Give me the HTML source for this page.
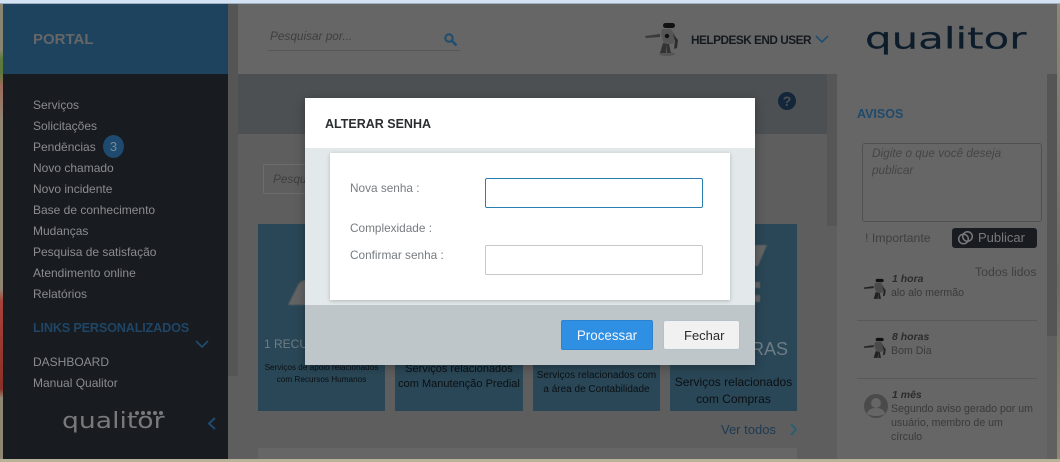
<!DOCTYPE html>
<html lang="pt"><head><meta charset="utf-8"><title>Qualitor</title>
<style>
*{box-sizing:border-box}
html,body{margin:0;padding:0;width:1060px;height:462px;overflow:hidden;background:#5e5e5e;font-family:"Liberation Sans",sans-serif}
.a{position:absolute;white-space:nowrap}
.nav{left:33px;font-size:12px;color:#8a8c8f;line-height:16px}
.logo{transform-origin:0 0;font-family:"DejaVu Sans",sans-serif}
.tile{position:absolute;top:224px;height:187px;background:#2a4757}
.tt{position:absolute;width:100%;text-align:center;color:#0b0f12;left:0;white-space:nowrap}
.time{font-weight:bold;font-style:italic;font-size:10.5px;color:#2c2c2c;left:892px}
.msg{font-size:10.6px;color:#3a3a3a;left:891px;line-height:14px}
.sep{position:absolute;left:857px;width:180px;height:1px;background:#585858}
.lbl{font-size:11.8px;color:#777c80;left:350px}
</style></head><body>
<!-- window edges -->
<div class="a" style="left:0;top:0;width:1060px;height:4px;background:#d3e3f3;border-bottom:1px solid #9fb0c0"></div>
<div class="a" style="left:0;top:4px;width:3px;height:458px;background:linear-gradient(#8a8570 0,#8a8570 10%,#5c7a3c 12%,#5c7a3c 15%,#a06a5c 18%,#8f8774 26%,#8f8774 62%,#a8423a 65%,#8a3028 84%,#8f8774 86%,#8f8774 100%)"></div>
<div class="a" style="left:1057px;top:4px;width:3px;height:458px;background:linear-gradient(#8d8877,#6d6a5e 60%,#8f8a72)"></div>
<div class="a" style="left:0;top:459px;width:1060px;height:3px;background:#b8b298"></div>
<!-- sidebar -->
<div class="a" style="left:3px;top:4px;width:225px;height:70px;background:#1d435f"></div>
<div class="a" style="left:3px;top:74px;width:225px;height:385px;background:#181b20"></div>
<div class="a" style="left:33px;top:31px;font-size:15px;font-weight:bold;color:#666;line-height:18px">PORTAL</div>
<div class="a nav" style="top:97px">Serviços</div>
<div class="a nav" style="top:118px">Solicitações</div>
<div class="a nav" style="top:139px">Pendências</div>
<div class="a" style="left:103px;top:135px;width:21px;height:23px;border-radius:50%;background:#1d4a6e;color:#7d8a94;font-size:13px;text-align:center;line-height:23px">3</div>
<div class="a nav" style="top:160px">Novo chamado</div>
<div class="a nav" style="top:181px">Novo incidente</div>
<div class="a nav" style="top:202px">Base de conhecimento</div>
<div class="a nav" style="top:223px">Mudanças</div>
<div class="a nav" style="top:244px">Pesquisa de satisfação</div>
<div class="a nav" style="top:265px">Atendimento online</div>
<div class="a nav" style="top:286px">Relatórios</div>
<div class="a" style="left:33px;top:320px;font-size:12.7px;font-weight:bold;color:#1f4666;line-height:16px;letter-spacing:-.2px">LINKS PERSONALIZADOS</div>
<svg class="a" style="left:195px;top:339px" width="14" height="10"><path d="M1 2l6 6 6-6" fill="none" stroke="#1f4d70" stroke-width="1.6"/></svg>
<div class="a nav" style="top:354px">DASHBOARD</div>
<div class="a nav" style="top:375px">Manual Qualitor</div>
<div class="a logo" style="left:62px;top:409px;font-size:22px;line-height:26px;color:#77797b;transform:scale(1.21,1)">qualitor</div>
<svg class="a" style="left:134px;top:410px" width="32" height="8"><g fill="#77797b"><circle cx="3" cy="3" r="2"/><circle cx="9" cy="3" r="2"/><circle cx="15" cy="3" r="2"/><circle cx="21" cy="3" r="2"/><circle cx="27" cy="3" r="2"/></g></svg>
<svg class="a" style="left:206px;top:416px" width="12" height="15"><path d="M9 2L3 7.5 9 13" fill="none" stroke="#1f4d70" stroke-width="2"/></svg>
<!-- main backgrounds -->
<div class="a" style="left:228px;top:4px;width:10px;height:372px;background:#555"></div>
<div class="a" style="left:238px;top:4px;width:819px;height:70px;background:#666"></div>
<div class="a" style="left:238px;top:74px;width:589px;height:60px;background:#4c5053"></div>
<div class="a" style="left:827px;top:74px;width:10px;height:152px;background:#565656"></div>
<div class="a" style="left:837px;top:74px;width:210px;height:385px;background:#666"></div>
<div class="a" style="left:1047px;top:74px;width:10px;height:385px;background:#606060"></div>
<div class="a" style="left:1047px;top:74px;width:10px;height:262px;background:#555"></div>
<!-- header -->
<div class="a" style="left:270px;top:28px;font-size:11.8px;font-style:italic;color:#3f3f3f;line-height:16px">Pesquisar por...</div>
<div class="a" style="left:268px;top:50px;width:192px;height:1px;background:#565656"></div>
<svg class="a" style="left:443px;top:32px" width="15" height="15"><circle cx="6" cy="6" r="3.7" fill="none" stroke="#1f4d70" stroke-width="2"/><path d="M9 9l4.5 4.5" stroke="#1f4d70" stroke-width="2.4"/></svg>
<svg class="a" style="left:644px;top:21px" width="36" height="36" viewBox="0 0 36 36"><ellipse cx="23" cy="33" rx="8" ry="2" fill="#555"/><rect x="19" y="2" width="12" height="5" rx="2.5" fill="#111"/><path d="M18 8h9l4 6-1 8-3 1h-6l-2-3-2-7z" fill="#555"/><circle cx="23" cy="15" r="2.2" fill="#111"/><path d="M1 15l15-2v3l-14 1z" fill="#3a3a3a"/><path d="M29 13l5 6-1 8-3 1 1-8z" fill="#2c2c2c"/><path d="M19 22l-3 10h6l1-9zM25 23l2 9h-4v-9z" fill="#333"/></svg>
<div class="a" style="left:691px;top:32px;font-size:11.8px;font-weight:bold;color:#15191d;line-height:16px;letter-spacing:-.5px">HELPDESK END USER</div>
<svg class="a" style="left:815px;top:34px" width="14" height="10"><path d="M1 2l6 6 6-6" fill="none" stroke="#1f4d70" stroke-width="1.6"/></svg>
<div class="a logo" style="left:865px;top:21px;font-size:33px;line-height:40px;color:#0d1c2b;transform:scale(1.27,.89);-webkit-text-stroke:.2px #0d1c2b">qualitor</div>
<!-- content -->
<svg class="a" style="left:778px;top:92px" width="18" height="18"><circle cx="9" cy="9" r="9" fill="#13263a"/><text x="9" y="14" font-size="14" font-weight="bold" text-anchor="middle" fill="#4c5053" font-family="Liberation Sans">?</text></svg>
<div class="a" style="left:263px;top:164px;width:60px;height:30px;border:1px solid #6c6c6c;border-radius:2px;font-size:11.8px;font-style:italic;color:#3f3f3f;line-height:28px;padding-left:9px;overflow:hidden">Pesquisar</div>
<div class="tile" style="left:258px;width:127px">
 <svg class="a" style="left:29px;top:53px;filter:blur(.7px)" width="60" height="30"><path d="M1 28l10-20q3-5 8-5h40v25z" fill="#646464"/></svg>
 <div class="a" style="left:6px;top:113px;font-size:12px;color:#6e7c84">1 RECURSOS</div>
 <div class="tt" style="top:138px;font-size:8.2px;line-height:11.5px">Serviços de apoio relacionados<br>com Recursos Humanos</div>
</div>
<div class="tile" style="left:395px;width:128px"><div class="tt" style="top:138px;font-size:11px;line-height:15px">Serviços relacionados<br>com Manutenção Predial</div></div>
<div class="tile" style="left:533px;width:127px"><div class="tt" style="top:145px;font-size:10px;line-height:14px">Serviços relacionados com<br>a área de Contabilidade</div></div>
<div class="tile" style="left:670px;width:127px">
 <svg class="a" style="left:85px;top:20px;filter:blur(.6px)" width="14" height="62"><path d="M0 1h12L3 22H0zM0 38h5v6H0zM0 51h5v7H0z" fill="#646464"/></svg>
 <div class="a" style="left:27px;top:115px;font-size:18px;line-height:20px;color:#6e7c84">COMPRAS</div>
 <div class="tt" style="top:150px;font-size:12px;line-height:17px">Serviços relacionados<br>com Compras</div>
</div>
<div class="a" style="left:721px;top:421px;font-size:13px;color:#1d3a52;line-height:17px">Ver todos</div>
<svg class="a" style="left:789px;top:423px" width="10" height="13"><path d="M2 1l5 5.5L2 12" fill="none" stroke="#2a5f72" stroke-width="2"/></svg>
<div class="a" style="left:258px;top:448px;width:539px;height:11px;background:#666"></div>
<!-- avisos -->
<div class="a" style="left:857px;top:106px;font-size:12.5px;font-weight:bold;color:#204a6b;line-height:16px">AVISOS</div>
<div class="a" style="left:862px;top:143px;width:180px;height:79px;border:1px solid #505050;border-radius:3px"></div>
<div class="a" style="left:872px;top:145px;font-size:11.8px;font-style:italic;color:#454545;line-height:17px">Digite o que você deseja<br>publicar</div>
<div class="a" style="left:865px;top:230px;font-size:12.3px;color:#3f3f3f;line-height:16px">! Importante</div>
<div class="a" style="left:952px;top:228px;width:85px;height:20px;background:#181b20;border-radius:3px;color:#77797b;font-size:13px;line-height:19px;padding-left:26px">Publicar</div>
<svg class="a" style="left:957px;top:230px" width="17" height="16"><circle cx="6.5" cy="9" r="4.8" fill="none" stroke="#77797b" stroke-width="1.5"/><circle cx="10.5" cy="6.5" r="4.8" fill="none" stroke="#77797b" stroke-width="1.5"/></svg>
<div class="a" style="left:975px;top:264px;font-size:12.3px;color:#3f3f3f;line-height:16px">Todos lidos</div>
<svg class="a" style="left:863px;top:277px" width="24" height="25" viewBox="0 0 36 36"><rect x="19" y="2" width="12" height="5" rx="2.5" fill="#111"/><path d="M18 8h9l4 6-1 8-3 1h-6l-2-3-2-7z" fill="#4a4a4a"/><path d="M1 15l15-2v3l-14 1z" fill="#222"/><path d="M29 13l5 6-1 8-3 1 1-8z" fill="#222"/><path d="M19 22l-3 10h6l1-9zM25 23l2 9h-4v-9z" fill="#222"/></svg>
<div class="a time" style="top:273px">1 hora</div>
<div class="a msg" style="top:286px">alo alo mermão</div>
<div class="sep" style="top:320px"></div>
<svg class="a" style="left:863px;top:336px" width="24" height="25" viewBox="0 0 36 36"><rect x="19" y="2" width="12" height="5" rx="2.5" fill="#111"/><path d="M18 8h9l4 6-1 8-3 1h-6l-2-3-2-7z" fill="#4a4a4a"/><path d="M1 15l15-2v3l-14 1z" fill="#222"/><path d="M29 13l5 6-1 8-3 1 1-8z" fill="#222"/><path d="M19 22l-3 10h6l1-9zM25 23l2 9h-4v-9z" fill="#222"/></svg>
<div class="a time" style="top:331px">8 horas</div>
<div class="a msg" style="top:344px">Bom Dia</div>
<div class="sep" style="top:378px"></div>
<svg class="a" style="left:864px;top:394px" width="24" height="24"><circle cx="12" cy="12" r="12" fill="#4a4a4a"/><circle cx="12" cy="9" r="5" fill="#666"/><path d="M3 20q1-6 9-6t9 6q-4 2-9 2t-9-2z" fill="#666"/></svg>
<div class="a time" style="top:389px">1 mês</div>
<div class="a msg" style="top:402px">Segundo aviso gerado por um<br>usuário, membro de um<br>círculo</div>
<!-- modal -->
<div class="a" style="left:305px;top:98px;width:450px;height:267px;background:#e3e8eb;box-shadow:0 2px 10px rgba(0,0,0,.3)"></div>
<div class="a" style="left:305px;top:98px;width:450px;height:50px;background:#fff"></div>
<div class="a" style="left:325px;top:116px;font-size:12.5px;font-weight:bold;color:#2b2e31;line-height:17px">ALTERAR SENHA</div>
<div class="a" style="left:330px;top:153px;width:400px;height:147px;background:#fff;box-shadow:0 1px 4px rgba(0,0,0,.22)"></div>
<div class="a lbl" style="top:180px;line-height:16px">Nova senha :</div>
<div class="a lbl" style="top:220px;line-height:16px">Complexidade :</div>
<div class="a lbl" style="top:247px;line-height:16px">Confirmar senha :</div>
<div class="a" style="left:485px;top:178px;width:218px;height:30px;border:1px solid #2a7fb0;border-radius:2px;background:#fff"></div>
<div class="a" style="left:485px;top:245px;width:218px;height:30px;border:1px solid #c5c9cc;border-radius:2px;background:#fff"></div>
<div class="a" style="left:305px;top:305px;width:450px;height:60px;background:#bfc6ca"></div>
<div class="a" style="left:561px;top:320px;width:92px;height:30px;background:#2f8fe3;border:1px solid #2b82d0;border-radius:2px;color:#f2f7fb;font-size:13.4px;text-align:center;line-height:29px">Processar</div>
<div class="a" style="left:663px;top:320px;width:77px;height:30px;background:#f1f1f1;border:1px solid #b5c2cc;border-radius:3px;color:#2b2b2b;font-size:13px;line-height:29px;padding-left:20px">Fechar</div>
</body></html>
